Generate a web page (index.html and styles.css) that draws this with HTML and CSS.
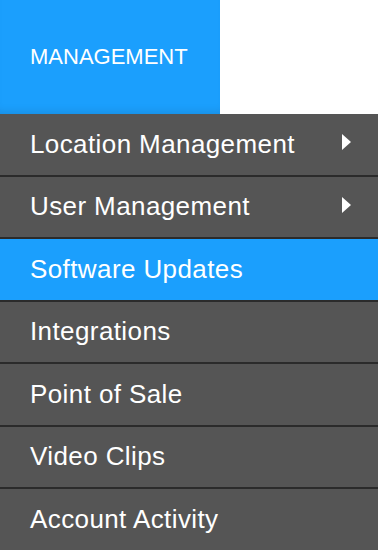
FILE: index.html
```html
<!DOCTYPE html>
<html lang="en">

<head>
  <meta charset="UTF-8">
  <meta name="viewport" content="width=device-width, initial-scale=1.0">
  <title>Management</title>
  <link rel="stylesheet" href="styles.css">
</head>
<body>
  <!-- top tab -->
  <div class="tab">MANAGEMENT</div>

  <!-- dropdown menu -->
  <ul class="menu">
    <li class="menu-item has-sub">Location Management</li>
    <li class="menu-item has-sub">User Management</li>
    <li class="menu-item active">Software Updates</li>
    <li class="menu-item">Integrations</li>
    <li class="menu-item">Point of Sale</li>
    <li class="menu-item">Video Clips</li>
    <li class="menu-item">Account Activity</li>
  </ul>
</body>

</html>
```

FILE: styles.css
```css
/* base */
body {
  font-family: 'Liberation Sans', Arial, sans-serif;
  margin: 0;
  padding: 0;
  background-color: #fff;
  color: #fff;
  overflow: hidden;
}

/* tab */
.tab {
  width: 220px;
  height: 114px;
  box-sizing: border-box;
  padding-left: 30px;
  display: flex;
  align-items: center;
  background-color: #1b9ffd;
  box-shadow: inset 0 -8px 8px -6px rgba(0, 0, 0, 0.12);
  font-size: 22px;
}

/* menu */
.menu {
  list-style: none;
  margin: 0;
  padding: 0;
}

.menu-item {
  position: relative;
  height: 60.5px;
  box-sizing: content-box;
  padding-left: 30px;
  display: flex;
  align-items: center;
  background-color: #555;
  border-bottom: 2px solid #2b2b2b;
  font-size: 26px;
  letter-spacing: 0.4px;
}

.menu-item.active {
  background-color: #1b9ffd;
}

.menu-item.has-sub::after {
  content: '';
  position: absolute;
  right: 27px;
  top: 50%;
  margin-top: -10px;
  width: 0;
  height: 0;
  border-top: 8px solid transparent;
  border-bottom: 8px solid transparent;
  border-left: 9px solid #fff;
}
```
